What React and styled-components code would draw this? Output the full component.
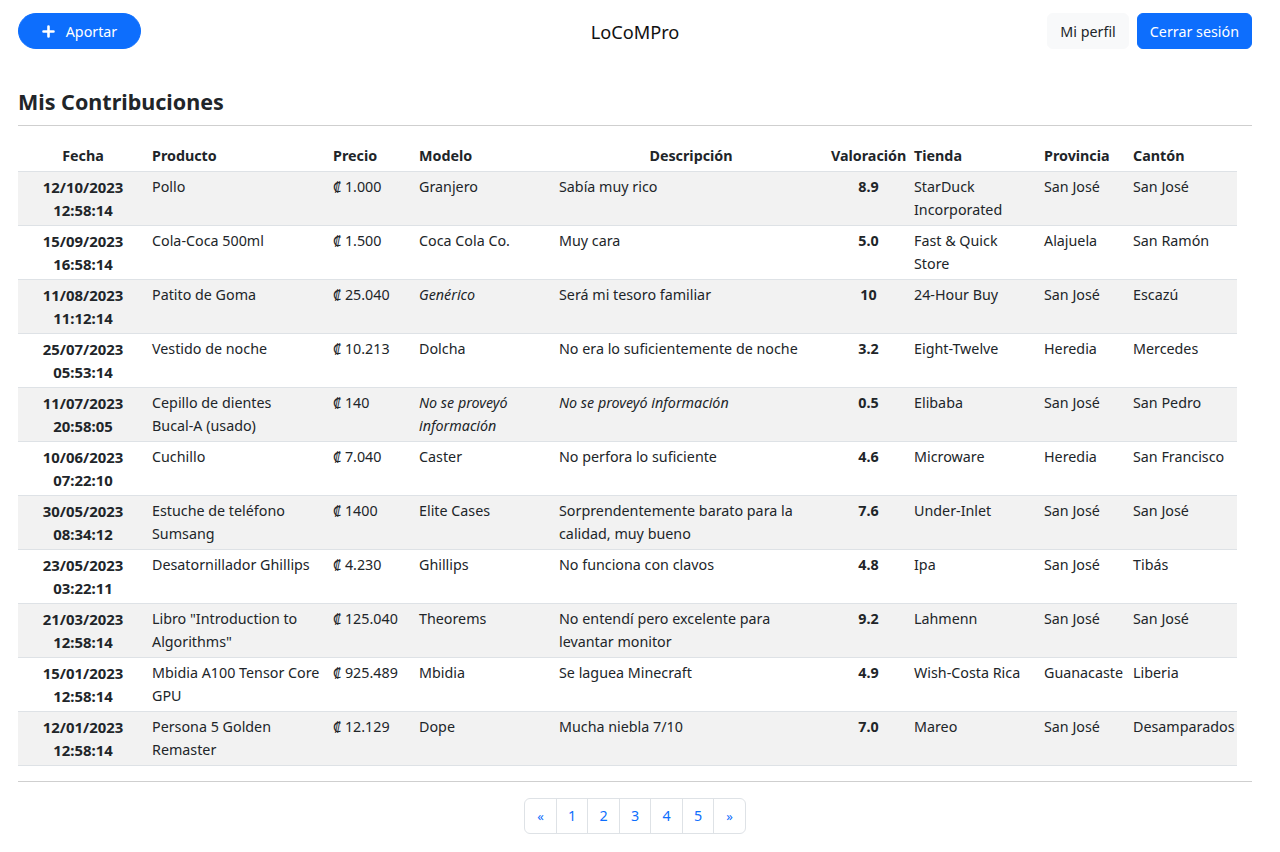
import React from 'react'
import styled, { createGlobalStyle } from 'styled-components'

const GlobalStyle = createGlobalStyle`
  body {
    margin: 0;
    background: #fff;
    color: #212529;
    font-family: "Noto Sans", "Open Sans", sans-serif;
    font-size: 14.3px;
    line-height: 22.5px;
  }
  * { box-sizing: border-box; }
`

const Page = styled.div`
  padding: 13px 28px 18px 18px;
`

const NavBar = styled.nav`
  display: grid;
  grid-template-columns: 1fr auto 1fr;
  align-items: center;
  height: 36px;
`

const Brand = styled.div`
  font-size: 18.2px;
  justify-self: center;
  color: #111;
  padding-top: 2px;
`

const NavRight = styled.div`
  display: flex;
  gap: 8px;
  justify-self: end;
`

const Button = styled.button`
  font-family: inherit;
  font-size: 14.3px;
  height: 36px;
  border: 1px solid ${p => (p.$primary ? '#0d6efd' : '#f8f9fa')};
  background: ${p => (p.$primary ? '#0d6efd' : '#f8f9fa')};
  color: ${p => (p.$primary ? '#fff' : '#212529')};
  border-radius: ${p => (p.$pill ? '18px' : '6px')};
  padding: 0 12px;
  display: inline-flex;
  align-items: center;
  gap: 11px;
  cursor: pointer;
`

const AddButton = styled(Button)`
  justify-self: start;
  width: 123px;
  justify-content: center;
`

const Title = styled.h3`
  margin: 40px 0 0;
  font-size: 21.5px;
  font-weight: 700;
  line-height: 1.2;
  padding-bottom: 10px;
  border-bottom: 1px solid #cfcfcf;
`

const Table = styled.table`
  margin-top: 15px;
  border-collapse: collapse;
  table-layout: fixed;
  width: 1219px;
`

const Th = styled.th`
  padding: 4px;
  text-align: ${p => p.$align || 'left'};
  font-weight: 700;
  border-bottom: 1px solid #dee2e6;
  vertical-align: bottom;
  white-space: nowrap;
`

const Row = styled.tr`
  background: ${p => (p.$odd ? '#f2f2f2' : '#fff')};
  border-bottom: 1px solid #dee2e6;
`

const Td = styled.td`
  padding: 4px;
  vertical-align: top;
  text-align: ${p => (p.$center ? 'center' : 'left')};
  font-weight: ${p => (p.$bold ? 700 : 400)};
  font-style: ${p => (p.$italic ? 'italic' : 'normal')};
`

const DateCell = styled(Td)`
  font-size: 14.9px;
`

const Divider = styled.hr`
  margin: 15px 0 16px;
  border: 0;
  border-top: 1px solid #cfcfcf;
`

const Pagination = styled.ul`
  display: flex;
  justify-content: center;
  list-style: none;
  margin: 0;
  padding: 0;
`

const PageLink = styled.li`
  width: 32.5px;
  height: 36px;
  display: flex;
  align-items: center;
  justify-content: center;
  color: #0d6efd;
  font-size: ${p => (p.$arrow ? '13px' : '14.3px')};
  border: 1px solid #dee2e6;
  margin-left: -1px;
  &:first-child { border-radius: 6px 0 0 6px; margin-left: 0; }
  &:last-child { border-radius: 0 6px 6px 0; }
`

const columns = [
  { label: 'Fecha', width: 130, align: 'center' },
  { label: 'Producto', width: 181 },
  { label: 'Precio', width: 86 },
  { label: 'Modelo', width: 140 },
  { label: 'Descripción', width: 272, align: 'center' },
  { label: 'Valoración', width: 83, align: 'center' },
  { label: 'Tienda', width: 130 },
  { label: 'Provincia', width: 89 },
  { label: 'Cantón', width: 108 },
]

const NA = 'No se proveyó información'

const rows = [
  ['12/10/2023', '12:58:14', 'Pollo', '1.000', 'Granjero', 'Sabía muy rico', '8.9', 'StarDuck Incorporated', 'San José', 'San José'],
  ['15/09/2023', '16:58:14', 'Cola-Coca 500ml', '1.500', 'Coca Cola Co.', 'Muy cara', '5.0', 'Fast & Quick Store', 'Alajuela', 'San Ramón'],
  ['11/08/2023', '11:12:14', 'Patito de Goma', '25.040', 'Genérico', 'Será mi tesoro familiar', '10', '24-Hour Buy', 'San José', 'Escazú', { italicModel: true }],
  ['25/07/2023', '05:53:14', 'Vestido de noche', '10.213', 'Dolcha', 'No era lo suficientemente de noche', '3.2', 'Eight-Twelve', 'Heredia', 'Mercedes'],
  ['11/07/2023', '20:58:05', 'Cepillo de dientes Bucal‑A (usado)', '140', NA, NA, '0.5', 'Elibaba', 'San José', 'San Pedro', { italicModel: true, italicDesc: true }],
  ['10/06/2023', '07:22:10', 'Cuchillo', '7.040', 'Caster', 'No perfora lo suficiente', '4.6', 'Microware', 'Heredia', 'San Francisco'],
  ['30/05/2023', '08:34:12', 'Estuche de teléfono Sumsang', '1400', 'Elite Cases', 'Sorprendentemente barato para la calidad, muy bueno', '7.6', 'Under-Inlet', 'San José', 'San José'],
  ['23/05/2023', '03:22:11', 'Desatornillador Ghillips', '4.230', 'Ghillips', 'No funciona con clavos', '4.8', 'Ipa', 'San José', 'Tibás'],
  ['21/03/2023', '12:58:14', 'Libro "Introduction to Algorithms"', '125.040', 'Theorems', 'No entendí pero excelente para levantar monitor', '9.2', 'Lahmenn', 'San José', 'San José'],
  ['15/01/2023', '12:58:14', 'Mbidia A100 Tensor Core GPU', '925.489', 'Mbidia', 'Se laguea Minecraft', '4.9', 'Wish-Costa Rica', 'Guanacaste', 'Liberia'],
  ['12/01/2023', '12:58:14', 'Persona 5 Golden Remaster', '12.129', 'Dope', 'Mucha niebla 7/10', '7.0', 'Mareo', 'San José', 'Desamparados'],
]

const PlusIcon = () => (
  <svg width="13" height="13" viewBox="0 0 13 13" aria-hidden="true">
    <path d="M6.5 1.5v10M1.5 6.5h10" stroke="#fff" strokeWidth="2.6" strokeLinecap="round" />
  </svg>
)

const App = () => {
  return (
    <Page>
      <GlobalStyle />
      <NavBar>
        <AddButton $primary $pill>
          <PlusIcon />
          Aportar
        </AddButton>
        <Brand>LoCoMPro</Brand>
        <NavRight>
          <Button>Mi perfil</Button>
          <Button $primary>Cerrar sesión</Button>
        </NavRight>
      </NavBar>

      <Title>Mis Contribuciones</Title>

      <Table>
        <colgroup>
          {columns.map(c => (
            <col key={c.label} style={{ width: c.width }} />
          ))}
        </colgroup>
        <thead>
          <tr>
            {columns.map(c => (
              <Th key={c.label} $align={c.align}>{c.label}</Th>
            ))}
          </tr>
        </thead>
        <tbody>
          {rows.map((r, i) => {
            const opts = r[10] || {}
            return (
              <Row key={i} $odd={i % 2 === 0}>
                <DateCell $center $bold>{r[0]}<br />{r[1]}</DateCell>
                <Td>{r[2]}</Td>
                <Td>₡ {r[3]}</Td>
                <Td $italic={opts.italicModel}>{r[4]}</Td>
                <Td $italic={opts.italicDesc}>{r[5]}</Td>
                <Td $center $bold>{r[6]}</Td>
                <Td>{r[7]}</Td>
                <Td>{r[8]}</Td>
                <Td>{r[9]}</Td>
              </Row>
            )
          })}
        </tbody>
      </Table>

      <Divider />

      <Pagination>
        <PageLink $arrow>«</PageLink>
        <PageLink>1</PageLink>
        <PageLink>2</PageLink>
        <PageLink>3</PageLink>
        <PageLink>4</PageLink>
        <PageLink>5</PageLink>
        <PageLink $arrow>»</PageLink>
      </Pagination>
    </Page>
  )
}

export default App
